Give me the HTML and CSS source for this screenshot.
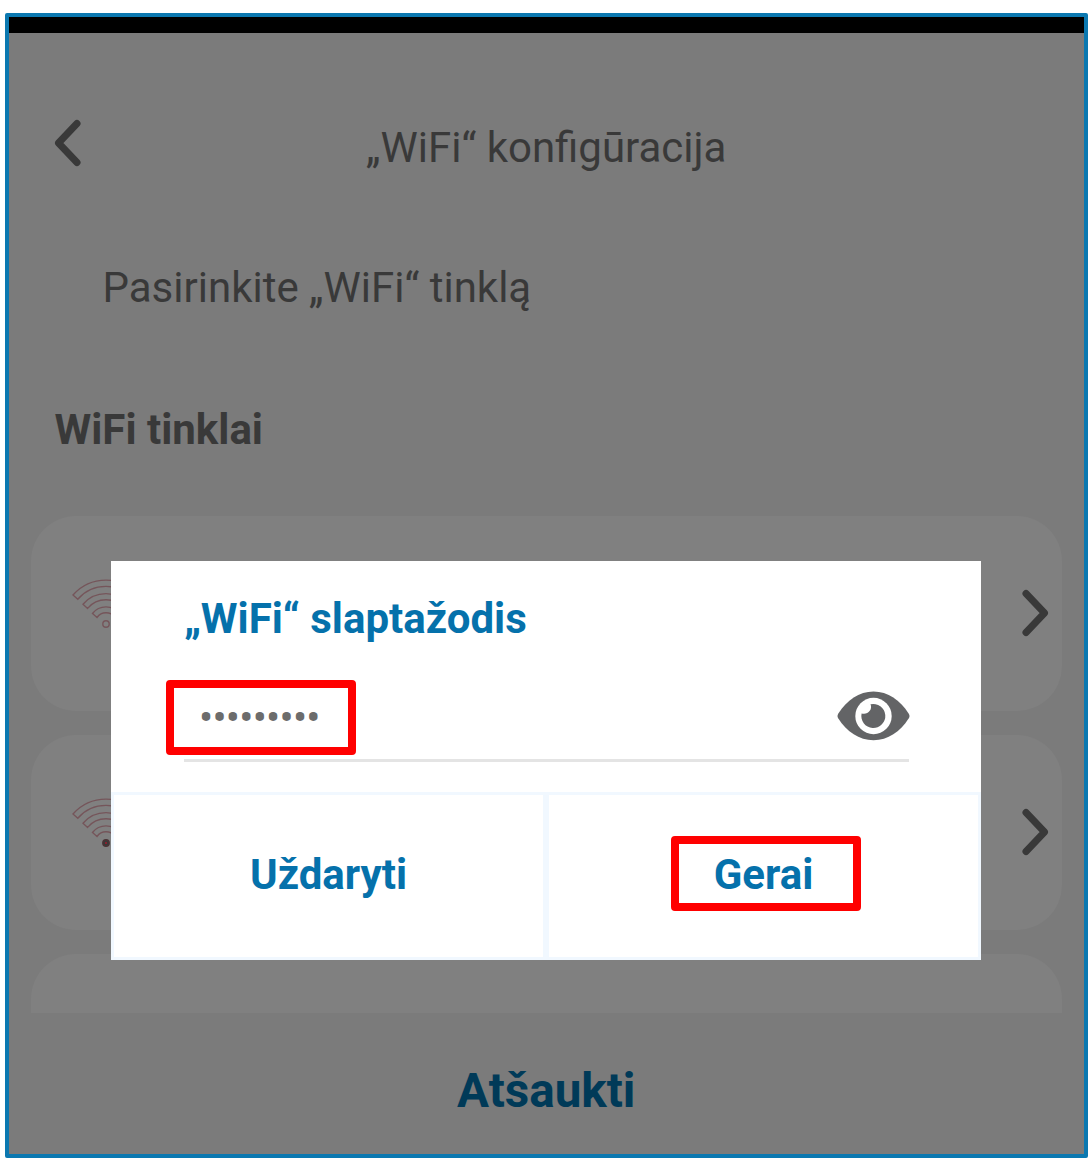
FILE: index.html
```html
<!DOCTYPE html>
<html lang="lt">
<head>
<meta charset="utf-8">
<title>„WiFi“ konfigūracija</title>
<link rel="stylesheet" href="styles.css">
</head>
<body>
<div class="phone">
  <div class="status-bar"></div>
  <header class="header">
    <svg class="chevron" width="28" height="48" viewBox="0 0 28 48"><path d="M23 4.5 4.5 24 23 43.5"/></svg>
    <h1 class="title">„WiFi“ konfigūracija</h1>
  </header>
  <p class="prompt">Pasirinkite „WiFi“ tinklą</p>
  <h2 class="section">WiFi tinklai</h2>
  <main class="networks">
    <div class="card">
      <svg class="wifi" width="68" height="50" viewBox="-34 -45 68 50"><path d="M-33-29A44 44 0 0 1 33-29L28.2-24.8A37.5 37.5 0 0 0-28.2-24.8ZM-23-19.8A30.3 30.3 0 0 1 23-19.8L18.4-15.6A24 24 0 0 0-18.4-15.6ZM-13.5-10.5A17 17 0 0 1 13.5-10.5L9-6.5A11 11 0 0 0-9-6.5Z"/><circle r="3.2"/></svg>
      <svg class="chevron" width="28" height="48" viewBox="0 0 28 48"><path d="M5 4.5 23.5 24 5 43.5"/></svg>
    </div>
    <div class="card">
      <svg class="wifi" width="68" height="50" viewBox="-34 -45 68 50"><path d="M-33-29A44 44 0 0 1 33-29L28.2-24.8A37.5 37.5 0 0 0-28.2-24.8ZM-23-19.8A30.3 30.3 0 0 1 23-19.8L18.4-15.6A24 24 0 0 0-18.4-15.6ZM-13.5-10.5A17 17 0 0 1 13.5-10.5L9-6.5A11 11 0 0 0-9-6.5Z"/><circle class="wifi-dot" r="3.2"/><circle class="wifi-core" r=".8"/></svg>
      <svg class="chevron" width="28" height="48" viewBox="0 0 28 48"><path d="M5 4.5 23.5 24 5 43.5"/></svg>
    </div>
    <div class="card"></div>
  </main>
  <footer class="footer">Atšaukti</footer>

  <div class="dialog">
    <div class="dialog-body">
      <h3 class="dialog-title">„WiFi“ slaptažodis</h3>
      <div class="field">
        <span class="password">•••••••••</span>
        <svg class="eye" width="73" height="50" viewBox="0 0 73 50"><path class="eye-shape" d="M1.2 22.7C10 9 22 .5 36.5 .5S63 9 71.8 22.7Q73.2 25 71.8 27.3C63 41 51 49.2 36.5 49.2S10 41 1.2 27.3Q-.2 25 1.2 22.7Z"/><circle class="eye-ring" cx="36.5" cy="25" r="18.2"/><path class="eye-shape" d="M33.5 13.3A12 12 0 1 1 24.6 22.4C30 24.5 36 19 33.5 13.3Z"/></svg>
      </div>
    </div>
    <div class="actions">
      <div class="action">Uždaryti</div>
      <div class="action">Gerai</div>
    </div>
    <div class="marker marker-password"></div>
    <div class="marker marker-confirm"></div>
  </div>
</div>
</body>
</html>
```

FILE: styles.css
```css
* { box-sizing: border-box; }
body {
  margin: 0;
  padding: 13px 4px 9px 4.5px;
  background: #fff;
  font-family: Roboto, "Liberation Sans", sans-serif;
  font-size: 42px;
}
h1, h2, h3, p { margin: 0; }
.phone {
  position: relative;
  display: flex;
  flex-direction: column;
  height: 1145px;
  border: 4px solid #0b78b0;
  border-radius: 2px;
  background: #7b7b7b;
  color: #393939;
}
.status-bar { height: 16px; background: #000; }
.header {
  display: grid;
  grid-template-columns: 100px 1fr 100px;
  align-items: center;
  height: 221px;
}
.header .chevron { margin: -1px 0 0 45px; }
.title {
  font-size: 42px;
  font-weight: 400;
  line-height: 50px;
  text-align: center;
  padding-top: 9px;
}
.chevron path {
  fill: none;
  stroke: #393939;
  stroke-width: 7;
  stroke-linecap: round;
  stroke-linejoin: round;
}
.prompt { padding-left: 94px; line-height: 50px; margin-top: 9px; }
.section { padding-left: 46px; margin-top: 92px; font-size: 42px; line-height: 50px; }
.networks {
  display: flex;
  flex-direction: column;
  gap: 24px;
  height: 497px;
  margin: 61px 22px 0;
  overflow: hidden;
}
.card {
  display: flex;
  flex: none;
  align-items: center;
  justify-content: space-between;
  height: 195px;
  padding: 0 13px 0 41.5px;
  border-radius: 45px;
  background: #808080;
}
.card .chevron { margin-top: -1px; }
.wifi { margin-top: -20px; fill: none; stroke: #75555a; stroke-width: 1.4; }
.wifi-dot { fill: #393939; stroke: #4a3336; }
.wifi-core { fill: #f00020; stroke: none; }
.footer {
  margin-top: 48px;
  color: #003a58;
  font-size: 47.6px;
  font-weight: 700;
  line-height: 60px;
  text-align: center;
}
.dialog {
  position: absolute;
  left: 102.5px;
  top: 543.5px;
  display: flex;
  flex-direction: column;
  width: 870px;
  height: 399px;
  background: #fff;
  color: #0571ab;
}
.dialog-body { flex: 1; padding: 33px 72px 0 73px; }
.dialog-title { font-size: 42px; line-height: 50px; }
.field {
  display: flex;
  align-items: center;
  justify-content: space-between;
  height: 118px;
  padding: 26px 0 0 15px;
  border-bottom: 3px solid #e4e4e4;
  color: #6c6c6c;
}
.password { padding-top: 7px; letter-spacing: -.75px; }
.eye { margin: 4px -1px 0 0; }
.eye-shape { fill: #636466; }
.eye-ring { fill: #fff; }
.actions { display: grid; grid-template-columns: 1fr 1fr; height: 168px; }
.action {
  border: 3px solid #f1f8ff;
  font-weight: 700;
  line-height: 160px;
  text-align: center;
}
.marker {
  position: absolute;
  width: 190px;
  height: 75px;
  border: 8px solid #f00;
  border-radius: 4px;
}
.marker-password { left: 55px; top: 119px; }
.marker-confirm { left: 559.5px; top: 275.5px; }
```
